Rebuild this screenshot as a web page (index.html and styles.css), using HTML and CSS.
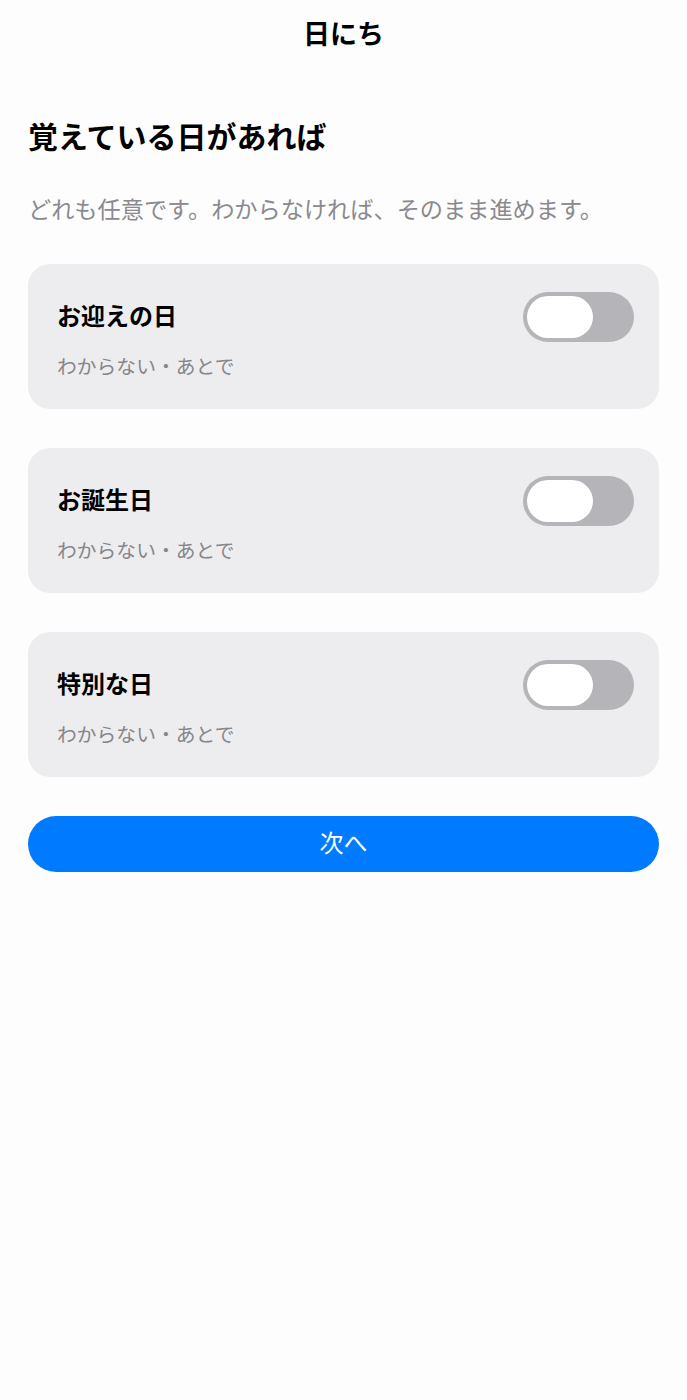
FILE: index.html
```html
<!DOCTYPE html>
<html lang="ja">
<head>
<meta charset="utf-8">
<title>日にち</title>
<link rel="stylesheet" href="styles.css">
</head>
<body>
<div class="page">
  <header class="nav">
    <h1 class="nav-title">日にち</h1>
  </header>
  <main class="content">
    <h2 class="heading">覚えている日があれば</h2>
    <p class="lead">どれも任意です。わからなければ、そのまま進めます。</p>
    <div class="cards">
      <section class="card">
        <div class="card-row">
          <span class="card-title">お迎えの日</span>
          <span class="toggle"><span class="knob"></span></span>
        </div>
        <div class="card-sub">わからない・あとで</div>
      </section>
      <section class="card">
        <div class="card-row">
          <span class="card-title">お誕生日</span>
          <span class="toggle"><span class="knob"></span></span>
        </div>
        <div class="card-sub">わからない・あとで</div>
      </section>
      <section class="card">
        <div class="card-row">
          <span class="card-title">特別な日</span>
          <span class="toggle"><span class="knob"></span></span>
        </div>
        <div class="card-sub">わからない・あとで</div>
      </section>
      <button class="next-btn" type="button">次へ</button>
    </div>
  </main>
</div>
</body>
</html>
```

FILE: styles.css
```css
html, body {
  margin: 0;
  padding: 0;
  background: #fdfdfd;
}
body {
  font-family: "Noto Sans CJK JP", "Noto Sans", "Liberation Sans", sans-serif;
  color: #000;
}
.page {
  width: 687px;
  min-height: 1400px;
}
.nav {
  padding-top: 15px;
  display: flex;
  justify-content: center;
}
.nav-title {
  margin: 0;
  font-size: 27px;
  line-height: 36px;
  font-weight: 700;
}
.content {
  padding: 0 28px;
}
.heading {
  margin: 64px 0 0 0;
  font-size: 30px;
  line-height: 40px;
  font-weight: 700;
}
.lead {
  margin: 37px 0 0 0;
  font-size: 23.2px;
  line-height: 32px;
  color: #8a8a8e;
}
.cards {
  margin-top: 40px;
  display: flex;
  flex-direction: column;
  gap: 39px;
}
.card {
  background: #ededf0;
  border-radius: 22px;
  padding: 28px 25px 28px 29px;
  height: 145px;
  box-sizing: border-box;
}
.card-row {
  display: flex;
  align-items: center;
  justify-content: space-between;
  height: 50px;
}
.card-title {
  font-size: 24px;
  line-height: 32px;
  font-weight: 700;
  padding-bottom: 4px;
}
.card-sub {
  margin-top: 11px;
  font-size: 19.8px;
  line-height: 26px;
  color: #86868a;
}
.toggle {
  width: 111px;
  height: 50px;
  border-radius: 25px;
  background: #b4b4b9;
  box-sizing: border-box;
  padding: 4px;
  display: flex;
  align-items: center;
}
.knob {
  width: 66px;
  height: 42px;
  border-radius: 21px;
  background: #ffffff;
}
.next-btn {
  height: 56px;
  border: none;
  border-radius: 28px;
  background: #007aff;
  color: #ffffff;
  font-family: "Noto Sans CJK JP", "Noto Sans", sans-serif;
  font-size: 24px;
  line-height: 30px;
  font-weight: 400;
  padding: 0 0 4px 0;
  width: 100%;
}
```
